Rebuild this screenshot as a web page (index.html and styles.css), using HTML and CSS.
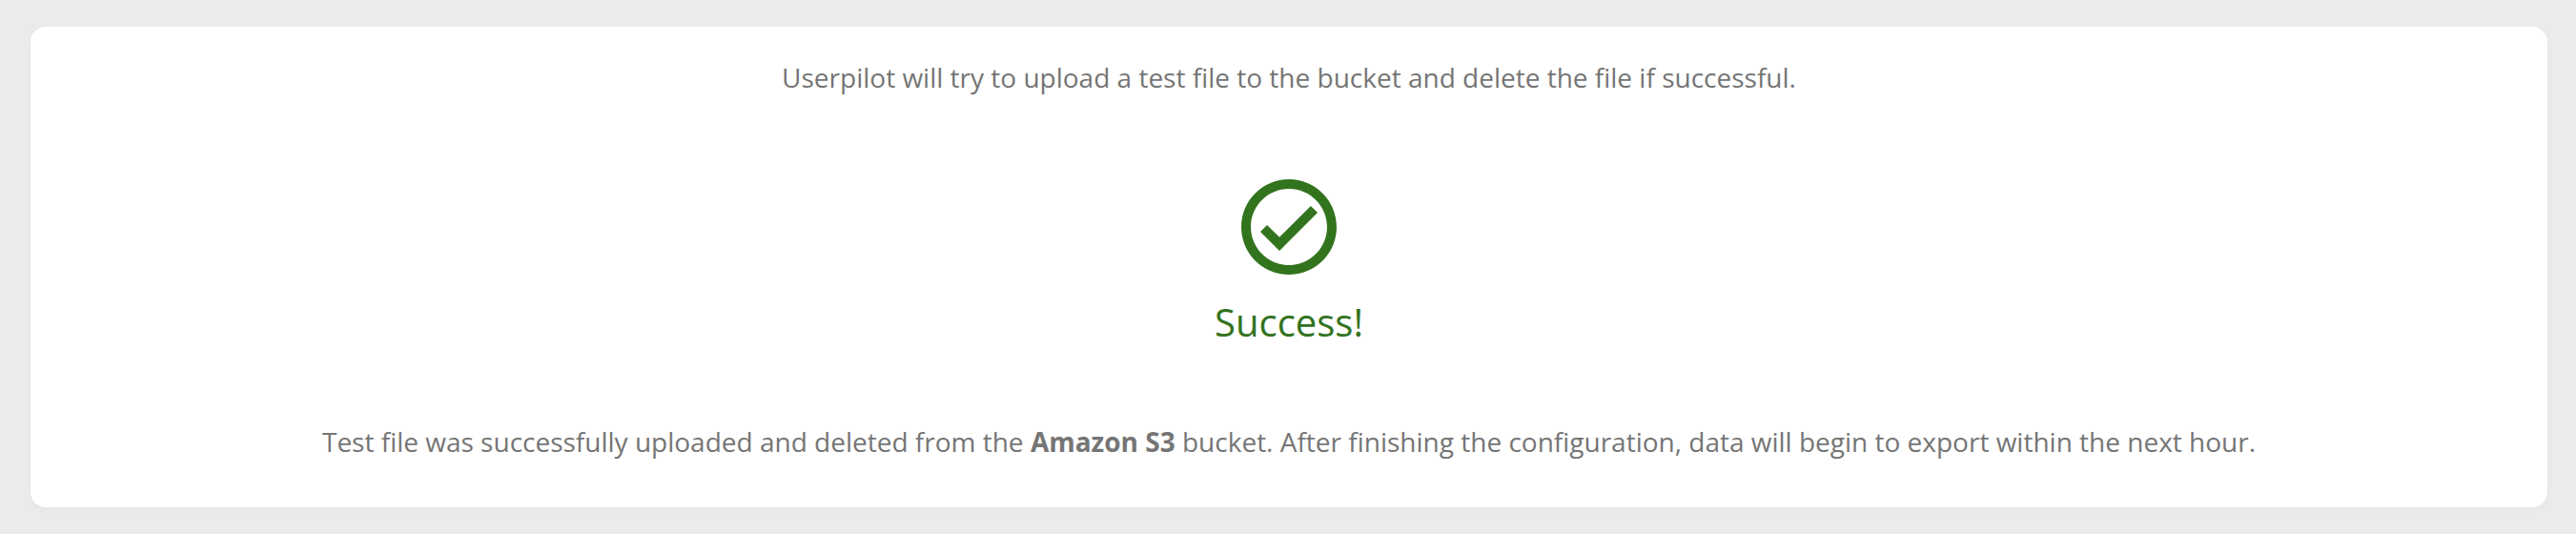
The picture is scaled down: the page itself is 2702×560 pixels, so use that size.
FILE: index.html
```html
<!DOCTYPE html>
<html lang="en">
<head>
    <meta charset="UTF-8">
    <meta name="viewport" content="width=device-width, initial-scale=1.0">
    <title>Test Connection</title>
    <link rel="stylesheet" href="styles.css">
</head>
<body>
    <div class="card">
        <p class="description">Userpilot will try to upload a test file to the bucket and delete the file if successful.</p>
        <svg class="check-icon" viewBox="0 0 24 24">
            <path d="M12 2C6.48 2 2 6.48 2 12s4.48 10 10 10 10-4.48 10-10S17.52 2 12 2zm0 18c-4.41 0-8-3.59-8-8s3.59-8 8-8 8 3.59 8 8-3.59 8-8 8zm4.59-12.42L10 14.17l-2.59-2.58L6 13l4 4 8-8z"/>
        </svg>
        <h2 class="status">Success!</h2>
        <p class="message">Test file was successfully uploaded and deleted from the <strong>Amazon S3</strong> bucket. After finishing the configuration, data will begin to export within the next hour.</p>
    </div>
</body>
</html>
```
FILE: styles.css
```css
* {
    box-sizing: border-box;
    margin: 0;
}

body {
    height: 560px;
    padding: 28px 30px 28px 32px;
    background-color: #ebebed;
    font-family: "Open Sans", sans-serif;
    color: #757575;
    overflow: hidden;
}

.card {
    height: 504px;
    padding-top: 33px;
    display: flex;
    flex-direction: column;
    align-items: center;
    background-color: #fff;
    border-radius: 16px;
    box-shadow: 0 2px 6px rgba(0, 0, 0, 0.03);
}

.description,
.message {
    font-size: 28px;
    line-height: 40px;
    white-space: nowrap;
}

.check-icon {
    width: 120px;
    height: 120px;
    margin-top: 77px;
    fill: #32731e;
}

.status {
    margin-top: 13px;
    font-size: 40px;
    font-weight: 400;
    line-height: 54px;
    color: #32731e;
}

.message {
    margin-top: 78px;
}
```
